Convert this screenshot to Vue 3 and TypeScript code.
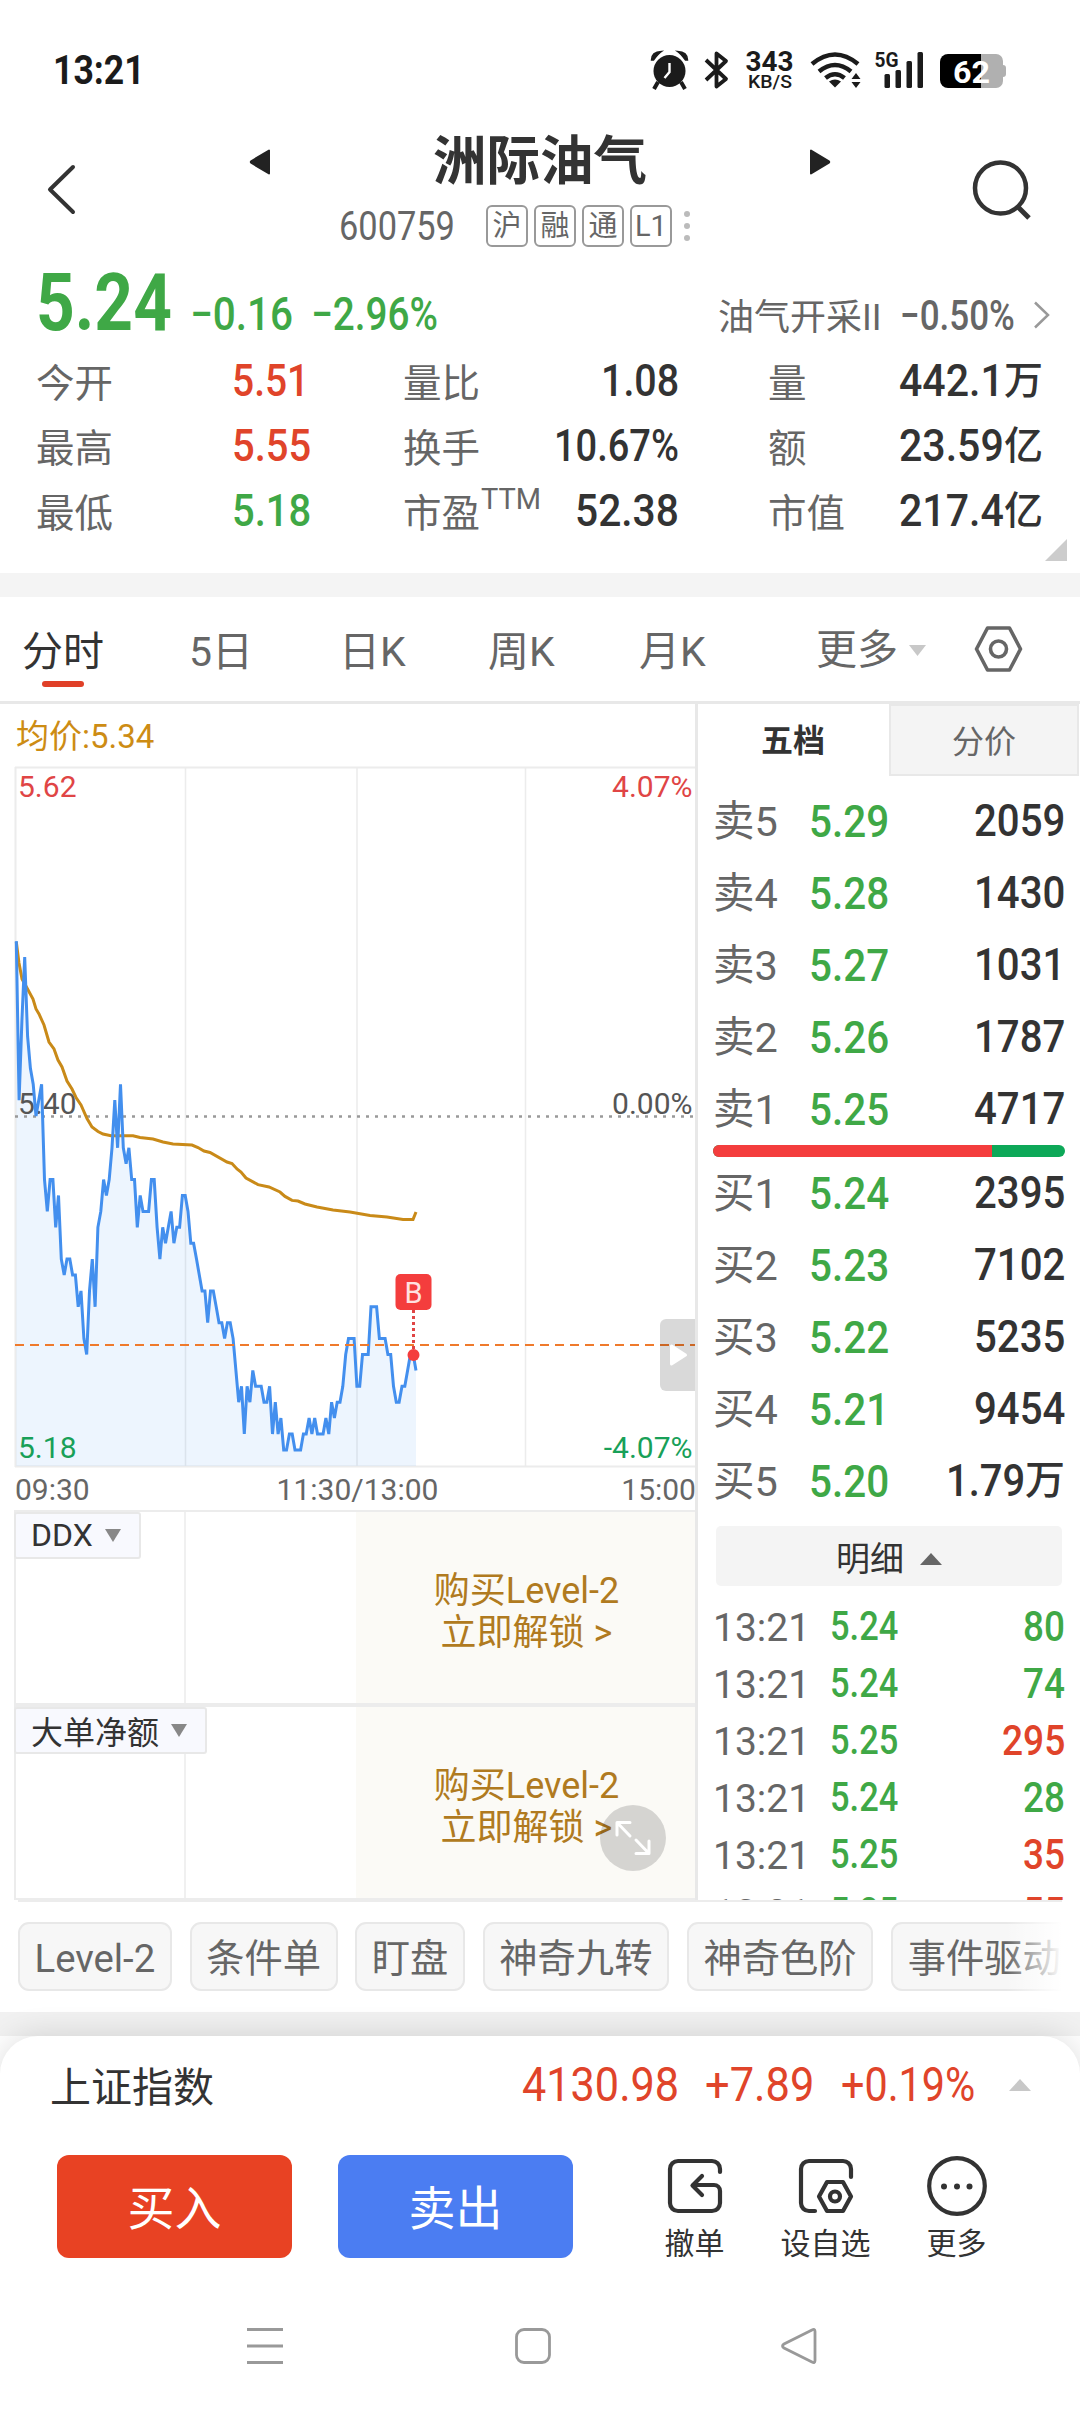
<script setup lang="ts">
import type { Directive } from 'vue'

/* Condenses a run of text to the given width in px; the layout box follows. */
const vFit: Directive<HTMLElement, number> = {
  mounted(el, { value }) {
    const natural = el.offsetWidth
    el.style.transformOrigin = 'left center'
    el.style.transform = `scaleX(${value / natural})`
    el.style.marginRight = `${value - natural}px`
  },
}

interface Stat { label: string; sup?: string; value: string; w: number; unit?: string; tone: string }
const stats: Stat[][] = [
  [
    { label: '今开', value: '5.51', w: 77, tone: 'up' },
    { label: '最高', value: '5.55', w: 79, tone: 'up' },
    { label: '最低', value: '5.18', w: 79, tone: 'down' },
  ],
  [
    { label: '量比', value: '1.08', w: 78, tone: 'ink' },
    { label: '换手', value: '10.67%', w: 125, tone: 'ink' },
    { label: '市盈', sup: 'TTM', value: '52.38', w: 104, tone: 'ink' },
  ],
  [
    { label: '量', value: '442.1', w: 105, unit: '万', tone: 'ink' },
    { label: '额', value: '23.59', w: 105, unit: '亿', tone: 'ink' },
    { label: '市值', value: '217.4', w: 105, unit: '亿', tone: 'ink' },
  ],
]

const badges = ['沪', '融', '通', 'L1']

interface Quote { name: string; price: string; vol: string; w: number; unit?: string }
const asks: Quote[] = [
  { name: '卖5', price: '5.29', vol: '2059', w: 91 },
  { name: '卖4', price: '5.28', vol: '1430', w: 91 },
  { name: '卖3', price: '5.27', vol: '1031', w: 91 },
  { name: '卖2', price: '5.26', vol: '1787', w: 91 },
  { name: '卖1', price: '5.25', vol: '4717', w: 91 },
]
const bids: Quote[] = [
  { name: '买1', price: '5.24', vol: '2395', w: 91 },
  { name: '买2', price: '5.23', vol: '7102', w: 91 },
  { name: '买3', price: '5.22', vol: '5235', w: 91 },
  { name: '买4', price: '5.21', vol: '9454', w: 91 },
  { name: '买5', price: '5.20', vol: '1.79', w: 79, unit: '万' },
]
const bidShare = 79.3

const trades = [
  { price: '5.24', vol: '80', tone: 'down' },
  { price: '5.24', vol: '74', tone: 'down' },
  { price: '5.25', vol: '295', tone: 'up' },
  { price: '5.24', vol: '28', tone: 'down' },
  { price: '5.25', vol: '35', tone: 'up' },
  { price: '5.25', vol: '55', tone: 'up' },
]

const chips = ['Level-2', '条件单', '盯盘', '神奇九转', '神奇色阶', '事件驱动']

/* Minute prices, in cents below the previous close of 5.40 */
const drops = [
  -11, -1, -6, -10, -5, -3, -2, 0, -1, -2, 4, 6, 4, 4, 7, 5, 9, 10, 9, 9,
  10, 10, 12, 11, 14, 15, 11, 9, 12, 7, 6, 4, 5, 4, 2, -1, 2, -2, 2, 3,
  2, 4, 4, 7, 5, 6, 6, 6, 4, 4, 7, 9, 7, 8, 7, 6, 8, 7, 7, 5,
  5, 6, 8, 8, 9, 10, 11, 11, 13, 11, 11, 12, 13, 13, 14, 13, 13, 14, 16, 18,
  17, 20, 17, 18, 16, 17, 17, 17, 18, 18, 17, 20, 18, 20, 19, 21, 21, 20, 20, 21,
  21, 21, 20, 20, 19, 20, 19, 20, 20, 20, 19, 20, 18, 19, 18, 18, 17, 15, 14, 14,
  14, 17, 17, 15, 15, 15, 12, 12, 12, 14, 14, 14, 15, 15, 17, 18, 18, 17, 17, 16,
  15, 15, 16,
]
const x0 = 16.3
const step = 2.815
const priceLine = drops.map((d, i) => `${(x0 + i * step).toFixed(1)},${(350 + d * 15.9).toFixed(1)}`).join(' ')
const lastX = x0 + (drops.length - 1) * step
const priceArea = `${x0},700 ${priceLine} ${lastX},700`
const avgLine =
  '16.3,176 19,197 22,213 27,222 33,233 36,243 39,248 44,259 49,276 54,283 58,294 62,301 67,315 72,323 76,331.5 81,339 87,352.5 92,361 98,365.5 103,368 111,369.7 133,369.7 140,371.5 153,373 163,376 173,378 192,379 198,381.5 204,385 210,386.5 227,396 232,397.5 237,403 241,406 246,412 258,418.6 269,421 280,426 285,430.4 292,434.4 298,435 305,438 317,441 333,444 350,446 370,449.4 387,451 403,453.6 413,453.6 416,446'
</script>

<template>
  <div class="screen">
    <header class="status">
      <span class="clock" v-fit="92">13:21</span>
      <svg class="status-icons" width="370" height="50" viewBox="646 45 370 50">
        <g fill="#1b1b1b">
          <circle cx="669.500" cy="71" r="16" />
          <path d="M658 82l-4 7M681 82l4 7" stroke="#1b1b1b" stroke-width="4" />
          <path d="M651.500 60q0-8 10-8.500q-3 2-8 8.500zM687.500 60q0-8-10-8.500q3 2 8 8.500z" stroke="#1b1b1b" stroke-width="1.500" />
        </g>
        <path d="M669.500 63v9l-5 6" fill="none" stroke="#fff" stroke-width="2.400" />
        <path d="M706 60l20 19l-9.500 7.500v-33l9.500 7.500l-20 19" fill="none" stroke="#1b1b1b" stroke-width="3.800" stroke-linejoin="round" />
        <text x="745.500" y="71" textLength="48" lengthAdjust="spacingAndGlyphs" class="st" font-size="27">343</text>
        <text x="748" y="88" textLength="44" lengthAdjust="spacingAndGlyphs" class="st kb" font-size="18">KB/S</text>
        <g fill="none" stroke="#1b1b1b" stroke-width="4.500">
          <path d="M812 64q23-19 46 0" />
          <path d="M819 71.500q16-13 32 0" />
          <path d="M825.500 78q9.500-7.500 19 0" />
        </g>
        <path d="M829 81.500q6-4 12 0l-6 6z" fill="#1b1b1b" />
        <path d="M851.500 79l4.500-6l4.500 6zM851.500 82l4.500 6l4.500-6z" fill="#1b1b1b" />
        <text x="874.500" y="66.500" textLength="24" lengthAdjust="spacingAndGlyphs" class="st" font-size="21">5G</text>
        <g fill="#1b1b1b">
          <rect x="884.500" y="74" width="5.500" height="14" rx="1.500" />
          <rect x="895.500" y="70" width="5.500" height="18" rx="1.500" />
          <rect x="906.500" y="61" width="5.500" height="27" rx="1.500" />
          <rect x="917.500" y="52" width="5.500" height="36" rx="1.500" />
        </g>
        <path d="M981 54h15a7 7 0 0 1 7 7v4q3 0 3 3v6q0 3-3 3v4a7 7 0 0 1-7 7h-15z" fill="#b0b0b0" />
        <path d="M981 54h-33a8 8 0 0 0-8 8v18a8 8 0 0 0 8 8h33z" fill="#000" />
        <text x="953" y="82.500" textLength="37" lengthAdjust="spacingAndGlyphs" class="st pct" font-size="32">62</text>
      </svg>
    </header>

    <section class="head">
      <svg class="back" width="34" height="54" viewBox="0 0 34 54"><path d="M29 5L6 27.500L29 50" fill="none" stroke="#333" stroke-width="4" stroke-linecap="round" stroke-linejoin="round" /></svg>
      <svg class="prev" width="24" height="28" viewBox="0 0 24 28"><path d="M21 2.500v23L3.500 15q-1.500-1 0-2z" fill="#222" stroke="#222" stroke-width="2" stroke-linejoin="round" /></svg>
      <div class="name-block">
        <h1>洲际油气</h1>
        <div class="code-row">
          <span class="code num" v-fit="116">600759</span>
          <span v-for="b in badges" :key="b" class="badge">{{ b }}</span>
          <span class="dots"><i /><i /><i /></span>
        </div>
      </div>
      <svg class="next" width="24" height="28" viewBox="0 0 24 28"><path d="M3 2.500v23L20.500 15q1.500-1 0-2z" fill="#222" stroke="#222" stroke-width="2" stroke-linejoin="round" /></svg>
      <svg class="search" width="62" height="62" viewBox="970 158 62 62"><circle cx="1000.500" cy="188" r="25.500" fill="none" stroke="#333" stroke-width="4.500" /><path d="M1018 207l11 11" stroke="#333" stroke-width="5" /></svg>
    </section>

    <section class="price-row">
      <span class="price num" v-fit="136">5.24</span>
      <span class="chg num" v-fit="103">−0.16</span>
      <span class="chg pc num" v-fit="127">−2.96%</span>
      <span class="sector">油气开采II</span>
      <span class="sector-chg num" v-fit="115">−0.50%</span>
      <svg class="go" width="20" height="30" viewBox="0 0 20 30"><path d="M3 2.500L16 15L3 27.500" fill="none" stroke="#999" stroke-width="2.500" /></svg>
    </section>

    <section class="stats">
      <div v-for="(col, i) in stats" :key="i" class="stat-col" :class="'c' + i">
        <div v-for="s in col" :key="s.label" class="stat">
          <span class="lab">{{ s.label }}<sup v-if="s.sup">{{ s.sup }}</sup></span>
          <span class="val" :class="s.tone"><span class="num" v-fit="s.w">{{ s.value }}</span><b v-if="s.unit">{{ s.unit }}</b></span>
        </div>
      </div>
      <svg class="corner" width="22" height="22"><path d="M22 0v22H0z" fill="#ccc" /></svg>
    </section>
    <div class="band" />

    <nav class="tabs">
      <span class="tab t0 on">分时</span>
      <span class="tab t1">5日</span>
      <span class="tab t2">日K</span>
      <span class="tab t3">周K</span>
      <span class="tab t4">月K</span>
      <span class="tab t5">更多<svg width="17" height="11"><path d="M0 0h17l-8.500 11z" fill="#c8c8c8" /></svg></span>
      <svg class="hex" width="52" height="52" viewBox="0 0 52 52" fill="none" stroke="#666" stroke-width="3.600" stroke-linejoin="round"><path d="M15.500 5h22l11 21l-11 21h-22L4.500 26z" /><circle cx="26.500" cy="26" r="8" /></svg>
    </nav>

    <main class="main">
      <div class="left">
        <div class="avg">均价:5.34</div>
        <div class="chart">
          <svg width="695" height="702" viewBox="0 0 695 702">
            <g stroke="#ececec" stroke-width="2" fill="none">
              <path d="M15 1.500H696M15 700.500H696" />
              <path d="M15.500 1V701" />
              <path d="M185.500 1V701M357 1V701M525.500 1V701" stroke-width="1.500" />
            </g>
            <polygon :points="priceArea" fill="#3c8cf0" fill-opacity=".09" />
            <path d="M15 350.500H695" stroke="#999" stroke-width="2.500" stroke-dasharray="3 6" />
            <g class="axis">
              <text x="18" y="31" fill="#e04545">5.62</text>
              <text x="692.500" y="31" fill="#e04545" text-anchor="end">4.07%</text>
              <text x="18" y="348" fill="#555">5.40</text>
              <text x="692.500" y="348" fill="#555" text-anchor="end">0.00%</text>
              <text x="18" y="692" fill="#18a058">5.18</text>
              <text x="692.500" y="692" fill="#18a058" text-anchor="end">-4.07%</text>
            </g>
            <polyline :points="avgLine" fill="none" stroke="#c98a18" stroke-width="3" />
            <polyline :points="priceLine" fill="none" stroke="#438fee" stroke-width="3" />
            <path d="M15 579H696" stroke="#ef7a2c" stroke-width="2.200" stroke-dasharray="9 6" />
            <path d="M413.500 544v44" stroke="#e04545" stroke-width="3" stroke-dasharray="3 3" />
            <circle cx="413.500" cy="589" r="6" fill="#f43d3d" />
            <rect x="395.500" y="508" width="36" height="36" rx="5" fill="#f43d3d" />
            <text x="413.500" y="536.500" class="bm" text-anchor="middle">B</text>
            <path d="M695 553h-29a6 6 0 0 0-6 6v60a6 6 0 0 0 6 6h29z" fill="#000" fill-opacity=".15" />
            <path d="M671.500 580v18l14-9z" fill="#fff" stroke="#fff" stroke-width="3" stroke-linejoin="round" />
          </svg>
        </div>
        <div class="times"><span>09:30</span><span>11:30/13:00</span><span>15:00</span></div>
        <div v-for="name in ['DDX', '大单净额']" :key="name" class="indicator">
          <div class="q"><span class="sel">{{ name }}<svg width="16" height="13"><path d="M0 0h16l-8 13z" fill="#888" /></svg></span></div>
          <div class="q" />
          <div class="lock"><span>购买Level-2</span><span>立即解锁 &gt;</span></div>
        </div>
        <svg class="expand" width="66" height="66" viewBox="0 0 66 66"><circle cx="33" cy="33" r="33" fill="#000" fill-opacity=".15" /><path d="M17 30V17.500H30M18 18.500L30 31M49 36V48.500H36M48 47.500L36 35" fill="none" stroke="#fff" stroke-width="3" stroke-linecap="round" stroke-linejoin="round" /></svg>
      </div>

      <div class="right">
        <div class="book-tabs"><span class="on">五档</span><span class="off">分价</span></div>
        <div class="book">
          <div v-for="r in asks" :key="r.name" class="row"><span class="lv">{{ r.name }}</span><span class="pr num" v-fit="80">{{ r.price }}</span><span class="vo"><span class="num" v-fit="r.w">{{ r.vol }}</span></span></div>
        </div>
        <div class="ratio"><i :style="{ width: bidShare + '%' }" /></div>
        <div class="book">
          <div v-for="r in bids" :key="r.name" class="row"><span class="lv">{{ r.name }}</span><span class="pr num" v-fit="80">{{ r.price }}</span><span class="vo"><span class="num" v-fit="r.w">{{ r.vol }}</span><b v-if="r.unit">{{ r.unit }}</b></span></div>
        </div>
        <div class="detail">明细<svg width="22" height="12"><path d="M11 0l11 12H0z" fill="#666" /></svg></div>
        <div class="trades">
          <div v-for="(t, i) in trades" :key="i" class="trade"><span class="tm">13:21</span><span class="tp num" v-fit="68">{{ t.price }}</span><span class="tv num" :class="t.tone" v-fit="t.vol.length * 21">{{ t.vol }}</span></div>
        </div>
      </div>
    </main>

    <div class="chips"><span v-for="c in chips" :key="c" class="chip">{{ c }}</span></div>
    <div class="band low" />

    <footer class="sheet">
      <div class="index">
        <span class="iname">上证指数</span>
        <span class="num i1" v-fit="157">4130.98</span>
        <span class="num i2" v-fit="109">+7.89</span>
        <span class="num i3" v-fit="134">+0.19%</span>
        <svg width="24" height="14"><path d="M12 1l11 12H1z" fill="#c8c8c8" /></svg>
      </div>
      <div class="actions">
        <button class="buy">买入</button>
        <button class="sell">卖出</button>
        <div class="act a1">
          <svg width="60" height="60" viewBox="665 2156 60 60" fill="none" stroke="#333" stroke-width="4.200" stroke-linecap="round" stroke-linejoin="round"><path d="M720 2172v-3a8 8 0 0 0-8-8h-34a8 8 0 0 0-8 8v34a8 8 0 0 0 8 8h34a8 8 0 0 0 8-8v-12a6 6 0 0 0-6-6h-20M702 2176l-9.500 9.500l9.500 9.500" /></svg>
          <span>撤单</span>
        </div>
        <div class="act a2">
          <svg width="60" height="60" viewBox="796 2156 60 60" fill="none" stroke="#333" stroke-width="4.200" stroke-linecap="round" stroke-linejoin="round"><path d="M851 2177v-8a8 8 0 0 0-8-8h-34a8 8 0 0 0-8 8v34a8 8 0 0 0 8 8h6" /><path d="M827 2182h16l8 14.500l-8 14.500h-16l-8-14.500z" /><circle cx="835" cy="2196.500" r="5" /></svg>
          <span>设自选</span>
        </div>
        <div class="act a3">
          <svg width="60" height="60" viewBox="928 2156 60 60"><circle cx="958" cy="2186" r="27.800" fill="none" stroke="#333" stroke-width="4.200" /><g fill="#333"><circle cx="945" cy="2186.500" r="3" /><circle cx="958" cy="2186.500" r="3" /><circle cx="970.500" cy="2186.500" r="3" /></g></svg>
          <span>更多</span>
        </div>
      </div>
      <div class="sysnav">
        <svg width="36" height="38" viewBox="0 0 36 38" stroke="#999" stroke-width="3"><path d="M0 2.500h36M0 19h36M0 35.500h36" /></svg>
        <svg width="36" height="38" viewBox="0 0 36 38"><rect x="1.500" y="2.500" width="33" height="33" rx="7.500" fill="none" stroke="#999" stroke-width="2.800" /></svg>
        <svg width="38" height="38" viewBox="0 0 38 38"><path d="M35 4.500v29q0 3-3 1.500L4 21q-3-2 0-4L32 3q3-1.500 3 1.500z" fill="none" stroke="#999" stroke-width="2.800" /></svg>
      </div>
    </footer>
  </div>
</template>

<style>
body { background: #fff; }
</style>

<style scoped>
.screen { width: 1080px; height: 2412px; overflow: hidden; background: #fff; color: #333; font-family: Roboto, "Noto Sans CJK SC", sans-serif; display: flex; flex-direction: column; }
.screen * { box-sizing: border-box; }
svg { display: block; flex: none; }
.num { display: inline-block; white-space: nowrap; flex: none; font-weight: 500; }
.up { color: #e0442a; }
.down { color: #3fa846; }
.ink { color: #333; }

.status { height: 120px; display: flex; align-items: center; justify-content: space-between; padding: 19px 64px 0 53px; flex: none; }
.clock { display: inline-block; font: 700 41px/50px Roboto, sans-serif; color: #1b1b1b; }
.st { font-family: Roboto, sans-serif; font-weight: 700; fill: #1b1b1b; }
.st.kb { font-weight: 500; }
.st.pct { fill: #fff; }

.head { height: 136px; flex: none; display: flex; align-items: flex-start; padding-left: 44px; }
.back { margin-top: 42px; }
.prev { margin: 28px 0 0 170px; }
.name-block { width: 536px; display: flex; flex-direction: column; align-items: center; }
h1 { margin: 8px 0 0; font-size: 53.500px; line-height: 68px; font-weight: 700; color: #333; }
.code-row { display: flex; align-items: center; height: 42px; margin-top: 9px; width: 466px; padding-left: 32px; }
.code { font-size: 40px; font-weight: 400; color: #666; }
.badge { width: 42px; height: 42px; margin-left: 6px; border: 2px solid #999; border-radius: 6px; font-size: 29px; line-height: 38px; text-align: center; color: #666; flex: none; }
.code + .badge { margin-left: 31px; }
.dots { display: flex; flex-direction: column; gap: 6px; margin-left: 12px; }
.dots i { width: 6px; height: 6px; border-radius: 3px; background: #bbb; }
.next { margin-top: 28px; }
.search { margin: 38px 0 0 138px; }

.price-row { height: 96px; flex: none; display: flex; align-items: baseline; padding-left: 36px; color: #3fa846; line-height: 94px; }
.price { font-size: 80px; font-weight: 700; }
.chg { font-size: 46px; margin-left: 18px; }
.sector { margin-left: 280px; font-size: 36px; color: #666; white-space: nowrap; width: 160px; }
.sector-chg { font-size: 42px; color: #666; margin-left: 22px; }
.go { margin-left: 17px; }

.stats { height: 221px; flex: none; display: flex; position: relative; padding-left: 36px; }
.stat { height: 65px; display: flex; justify-content: space-between; align-items: center; }
.stat-col { margin-top: -4px; }
.stat-col.c0 { width: 278px; }
.stat-col.c1 { width: 276px; margin-left: 89px; }
.stat-col.c2 { width: 275px; margin-left: 89px; }
.c0 .val { width: 82px; }
.lab { font-size: 38.500px; color: #666; white-space: nowrap; margin-top: -2px; }
.lab sup { font-size: 29px; line-height: 0; vertical-align: 18px; margin-left: 1px; }
.val { font-size: 45px; white-space: nowrap; display: flex; align-items: center; height: 60px; }
.val b { font-size: 39px; font-weight: 500; line-height: 60px; }
.corner { position: absolute; left: 1045px; bottom: 12px; }
.band { height: 24px; background: #f4f4f4; flex: none; }

.tabs { height: 107px; flex: none; border-bottom: 3px solid #e8e8e8; display: flex; font-size: 41px; line-height: 111px; color: #666; padding-left: 22px; }
.tab { position: relative; flex: none; white-space: nowrap; height: 104px; }
.t0 { width: 167px; color: #333; }
.t0::after { content: ''; position: absolute; left: 20px; bottom: 14px; width: 42px; height: 6px; border-radius: 3px; background: #e04028; }
.t1 { width: 150px; }
.t2 { width: 149px; }
.t3 { width: 151px; }
.t4 { width: 177px; }
.t5 { width: 156px; display: flex; align-items: center; gap: 11px; height: 107px; }
.hex { margin-top: 26px; }

.main { height: 1196px; flex: none; display: flex; }
.left { width: 698px; border-right: 3px solid #e8e8e8; position: relative; flex: none; }
.avg { height: 62px; padding-left: 16px; font-size: 33px; line-height: 65px; color: #cd8c14; }
.axis text { font: 400 30px Roboto, sans-serif; }
.bm { font: 400 29px Roboto, sans-serif; fill: #ffe1e1; }
.times { height: 42px; display: flex; justify-content: space-between; padding: 0 0 0 15px; font-size: 30px; line-height: 44px; color: #666; }
.times span:nth-child(2) { margin-right: -4px; }
.times span:nth-child(3) { margin-right: -1px; }
.indicator { height: 195px; margin-left: 14px; border: 2px solid #ececec; border-right: 0; display: flex; }
.indicator + .indicator { margin-top: 0; }
.q { width: 170px; border-right: 2px solid #f0f0f0; flex: none; }
.q + .q { border: 0; }
.sel { display: inline-flex; align-items: center; gap: 12px; height: 47px; margin: 0 0 0 -2px; padding: 0 18px 1px 15px; border: 2px solid #e8e8e8; border-radius: 3px; background: #f8f9fe; font-size: 32px; white-space: nowrap; position: relative; }
.lock { flex: 1; background: #fbfaf6; display: flex; flex-direction: column; align-items: center; padding: 58px 0 0 2px; font-size: 36px; line-height: 42px; color: #b07a20; }
.expand { position: absolute; left: 600px; top: 1101px; }

.right { flex: 1; overflow: hidden; display: flex; flex-direction: column; }
.book-tabs { display: flex; height: 72px; flex: none; font-size: 32px; line-height: 75px; text-align: center; }
.book-tabs .on { width: 191px; font-weight: 700; padding-right: 1px; }
.book-tabs .off { flex: 1; margin-right: 1px; background: #f4f4f4; border: 2px solid #e8e8e8; color: #666; line-height: 73px; }
.book-tabs + .book { margin-top: 9px; }
.row { height: 72px; display: flex; align-items: center; padding: 0 15px 0 15px; }
.lv { width: 96px; font-size: 41.500px; color: #666; margin-top: -6px; }
.pr { font-size: 45px; color: #3fa846; }
.vo { margin-left: auto; display: flex; align-items: center; font-size: 45px; line-height: 60px; }
.vo b { font-size: 40px; font-weight: 500; }
.ratio { height: 12px; margin: 0 15px; border-radius: 6px; overflow: hidden; background: #0da858; display: flex; flex: none; }
.ratio i { background: #f43d3d; }
.detail { height: 60px; flex: none; margin: 9px 18px 0; border-radius: 5px; background: #f4f4f4; display: flex; align-items: center; justify-content: center; gap: 16px; font-size: 34px; }
.detail svg { margin-top: 6px; }
.trades { margin-top: 11px; }
.trade { height: 57.200px; display: flex; align-items: center; padding: 0 15px 0 15px; }
.tm { width: 117px; font-size: 39px; color: #666; margin-top: 4px; }
.tp { font-size: 41px; color: #3fa846; }
.tv { margin-left: auto; font-size: 43px; }

.chips { margin: 0 18px; height: 112px; flex: none; display: flex; gap: 18px; padding-top: 20px; overflow: hidden; position: relative; border-top: 2px solid #ececec; }
.chips::after { content: ''; position: absolute; right: 0; top: 2px; bottom: 0; width: 56px; background: linear-gradient(90deg, rgba(255,255,255,0), #fff); }
.chip { height: 69px; flex: none; padding: 0 14.500px; border: 2px solid #e8e8e8; border-radius: 11px; background: #f7f7f7; font-size: 38.300px; line-height: 69px; color: #666; white-space: nowrap; }
.chip:nth-child(3) { margin-left: -0.500px; }
.band.low { background: #f1f1f1; height: 24px; }

.sheet { flex: 1; background: #fff; border-radius: 38px 38px 0 0; box-shadow: 0 0 32px rgba(0,0,0,.14); position: relative; }
.index { height: 100px; display: flex; align-items: center; padding: 0 0 4px 50px; color: #e0442a; }
.iname { font-size: 41px; color: #333; width: 472px; }
.index .num { font-size: 49px; font-weight: 400; }
.i2, .i3 { margin-left: 26px; }
.index svg { margin: 2px 0 0 33px; }
.actions { display: flex; align-items: flex-start; padding: 19px 0 0 57px; height: 162px; }
button { width: 235px; height: 103px; border: 0; border-radius: 12px; color: #fff; font: 400 47px/107px Roboto, "Noto Sans CJK SC", sans-serif; padding: 0; }
.buy { background: #e84223; }
.sell { background: #4b7df2; margin-left: 46px; }
.act { width: 131px; display: flex; flex-direction: column; align-items: center; font-size: 30px; line-height: 40px; white-space: nowrap; flex: none; margin-top: 1px; }
.act span { margin-top: 8px; }
.a1 { margin-left: 56px; }
.sysnav { display: flex; padding: 29px 0 0 247px; }
.sysnav svg { margin-right: 232px; }
.sysnav svg:nth-child(2) { margin-right: 229px; }
</style>
